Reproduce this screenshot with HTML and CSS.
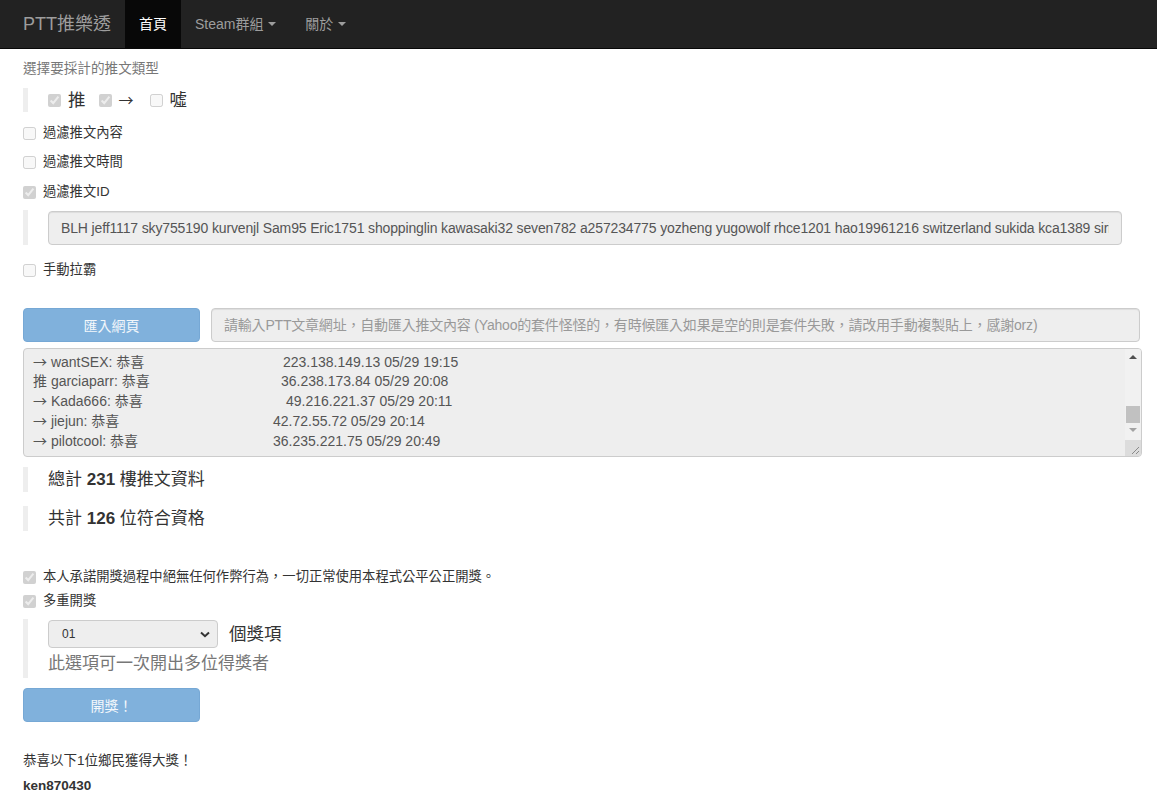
FILE: index.html
```html
<!DOCTYPE html>
<html lang="zh-Hant">
<head>
<meta charset="utf-8">
<title>PTT推樂透</title>
<link rel="stylesheet" href="styles.css">
</head>
<body>
<nav class="navbar">
  <div class="brand">PTT推樂透</div>
  <ul class="nav">
    <li class="active"><a href="#">首頁</a></li>
    <li><a href="#">Steam群組 <span class="caret"></span></a></li>
    <li><a href="#">關於 <span class="caret"></span></a></li>
  </ul>
</nav>
<main class="container">
  <div class="muted-label">選擇要採計的推文類型</div>
  <div class="bq types">
    <label class="opt"><input type="checkbox" disabled checked><span>推</span></label>
    <label class="opt"><input type="checkbox" disabled checked><span class="ar">→</span></label>
    <label class="opt"><input type="checkbox" disabled><span>噓</span></label>
  </div>
  <label class="check r1"><input type="checkbox" disabled><span>過濾推文內容</span></label>
  <label class="check r2"><input type="checkbox" disabled><span>過濾推文時間</span></label>
  <label class="check r3"><input type="checkbox" disabled checked><span>過濾推文ID</span></label>
  <div class="bq ids">
    <input class="form-control idlist" type="text" readonly value="BLH jeff1117 sky755190 kurvenjl Sam95 Eric1751 shoppinglin kawasaki32 seven782 a257234775 yozheng yugowolf rhce1201 hao19961216 switzerland sukida kca1389 sirius0913 momo520 ilovepoo">
  </div>
  <label class="check r4"><input type="checkbox" disabled><span>手動拉霸</span></label>
  <div class="import">
    <button class="btn" disabled>匯入網頁</button>
    <input class="form-control url" type="text" readonly placeholder="請輸入PTT文章網址，自動匯入推文內容 (Yahoo的套件怪怪的，有時候匯入如果是空的則是套件失敗，請改用手動複製貼上，感謝orz)">
  </div>
  <div class="log">
    <div class="log-text">
      <div class="line"><span class="who w1"><span class="ar">→</span> wantSEX: 恭喜</span>223.138.149.13 05/29 19:15</div>
      <div class="line"><span class="who w2">推 garciaparr: 恭喜</span>36.238.173.84 05/29 20:08</div>
      <div class="line"><span class="who w3"><span class="ar">→</span> Kada666: 恭喜</span>49.216.221.37 05/29 20:11</div>
      <div class="line"><span class="who w4"><span class="ar">→</span> jiejun: 恭喜</span>42.72.55.72 05/29 20:14</div>
      <div class="line"><span class="who w5"><span class="ar">→</span> pilotcool: 恭喜</span>36.235.221.75 05/29 20:49</div>
    </div>
    <div class="sb">
      <span class="arrow up"></span>
      <span class="thumb"></span>
      <span class="arrow down"></span>
    </div>
    <div class="grip">
      <svg width="16" height="16" viewBox="0 0 16 16"><path d="M14 7 L7 14 M14 11 L11 14" stroke="#8a8a8a" stroke-width="1" fill="none"/></svg>
    </div>
  </div>
  <div class="bq stat s1">總計 <b>231</b> 樓推文資料</div>
  <div class="bq stat s2">共計 <b>126</b> 位符合資格</div>
  <label class="check r5"><input type="checkbox" disabled checked><span>本人承諾開獎過程中絕無任何作弊行為，一切正常使用本程式公平公正開獎。</span></label>
  <label class="check r6"><input type="checkbox" disabled checked><span>多重開獎</span></label>
  <div class="bq multi">
    <div class="multi-row">
      <div class="select"><span>01</span>
        <svg width="10" height="7" viewBox="0 0 10 7"><path d="M1 1.5 L5 5.2 L9 1.5" stroke="#333" stroke-width="2" fill="none"/></svg>
      </div>
      <span class="unit">個獎項</span>
    </div>
    <div class="hint">此選項可一次開出多位得獎者</div>
  </div>
  <button class="btn draw" disabled>開獎！</button>
  <p class="result">恭喜以下1位鄉民獲得大獎！</p>
  <p class="winner">ken870430</p>
</main>
</body>
</html>
```
FILE: styles.css
```css
* { box-sizing: border-box; }
html, body { margin: 0; padding: 0; }
body {
  font-family: "Liberation Sans", "Noto Sans CJK TC", sans-serif;
  font-size: 14px;
  line-height: 20px;
  color: #333;
  background: #fff;
}
ul { list-style: none; margin: 0; padding: 0; }

.navbar {
  display: flex;
  height: 49px;
  background: #222;
  border-bottom: 1px solid #080808;
  padding-left: 8px;
}
.brand {
  padding: 0 14px 0 15px;
  line-height: 48px;
  font-size: 18px;
  color: #9d9d9d;
}
.nav { display: flex; }
.nav a {
  display: block;
  padding: 0 14px;
  line-height: 48px;
  color: #9d9d9d;
  text-decoration: none;
}
.nav li + li + li a { padding-left: 15px; }
.nav .active a { background: #080808; color: #fff; }
.caret {
  display: inline-block;
  width: 0; height: 0;
  border-top: 4px solid #9d9d9d;
  border-left: 4px solid transparent;
  border-right: 4px solid transparent;
  vertical-align: middle;
  margin-left: 1px;
  margin-top: -2px;
}

.container { padding: 0 15px 0 23px; }
.muted-label { margin-top: 9px; padding-top: 1px; color: #777; height: 20px; line-height: 19px; font-size: 13.6px; }

.bq { border-left: 5px solid #eee; padding: 0 20px; margin: 0; }

.ar { font-family: "Noto Sans CJK TC", sans-serif; }

.types {
  display: flex;
  align-items: center;
  gap: 13px;
  margin-top: 10px;
  height: 24px;
  font-size: 17.5px;
}
.types .ar { font-size: 15px; margin-right: 3px; }
.opt { display: flex; align-items: center; gap: 7px; }
input[type=checkbox] { margin: 0; width: 13px; height: 13px; flex: none; }

.check { display: flex; align-items: center; gap: 7px; height: 20px; padding-top: 2px; font-size: 13.3px; }
.r1 { margin-top: 10px; }
.r2 { margin-top: 9px; }
.r3 { margin-top: 10px; }
.r4 { margin-top: 14px; }
.r5 { margin-top: 35px; }
.r6 { margin-top: 4px; }

.ids { margin-top: 9px; padding-top: 1px; height: 35px; }
.form-control {
  display: block;
  width: 100%;
  height: 34px;
  padding: 6px 12px;
  font-family: inherit;
  font-size: 14px;
  color: #555;
  background: #eee;
  border: 1px solid #ccc;
  border-radius: 4px;
  box-shadow: inset 0 1px 1px rgba(0,0,0,.075);
  outline: none;
}
.form-control::placeholder { color: #999; }
.idlist { letter-spacing: -0.14px; }
.url::placeholder { letter-spacing: -0.2px; }

.import { display: flex; gap: 11px; margin-top: 29px; padding-right: 2px; }
.btn {
  flex: none;
  width: 177px;
  height: 34px;
  font-family: inherit;
  font-size: 14px;
  color: #f3f7fb;
  background: #80b1dc;
  border: 1px solid #76a8d5;
  border-radius: 4px;
}
.url { flex: 1; }

.log {
  position: relative;
  height: 109px;
  margin-top: 6px;
  border: 1px solid #ccc;
  border-radius: 4px;
  background: #eee;
  overflow: hidden;
  color: #555;
}
.log-text { padding: 3px 20px 0 9px; }
.line { height: 19.7px; line-height: 19.7px; white-space: nowrap; }
.who { display: inline-block; }
.w1 { width: 250px; }
.w2 { width: 248px; }
.w3 { width: 253px; }
.w4 { width: 240px; }
.w5 { width: 240px; }
.sb {
  position: absolute;
  right: 0; top: 0;
  width: 16px; height: 92px;
  background: #f1f1f1;
}
.arrow {
  position: absolute;
  left: 4px;
  width: 0; height: 0;
  border-left: 4px solid transparent;
  border-right: 4px solid transparent;
}
.arrow.up { top: 6px; border-bottom: 4px solid #505050; }
.arrow.down { top: 79px; border-top: 4px solid #a3a3a3; }
.thumb {
  position: absolute;
  left: 1px; top: 57px;
  width: 14px; height: 17px;
  background: #c1c1c1;
}
.grip {
  position: absolute;
  right: 0; bottom: 0;
  width: 16px; height: 16px;
  background: #dcdcdc;
}
.grip svg { display: block; }

.stat { font-size: 17px; height: 25px; line-height: 25px; }
.stat b { font-weight: bold; }
.s1 { margin-top: 10px; }
.s2 { margin-top: 14px; }

.multi { margin-top: 9px; padding-top: 1px; }
.multi-row { display: flex; align-items: center; gap: 11px; height: 28px; }
.select {
  width: 170px;
  height: 28px;
  display: flex;
  align-items: center;
  justify-content: space-between;
  padding: 0 7px 0 13px;
  font-size: 12px;
  color: #333;
  background: #eee;
  border: 1px solid #ccc;
  border-radius: 4px;
}
.select svg { display: block; }
.unit { font-size: 17.5px; }
.hint { font-size: 17px; color: #777; height: 30px; line-height: 32px; }

.draw { display: block; margin-top: 10px; }
.result { margin: 29px 0 0; height: 20px; font-size: 13.5px; }
.winner { margin: 5px 0 0; height: 20px; font-weight: bold; font-size: 13.5px; }
```
